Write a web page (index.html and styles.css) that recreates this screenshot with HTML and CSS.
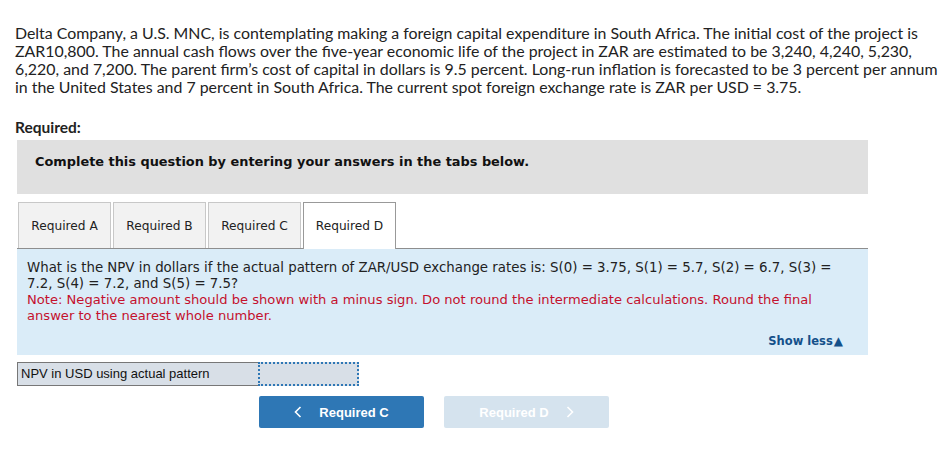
FILE: index.html
```html
<!DOCTYPE html>
<html>
<head>
<meta charset="utf-8">
<link rel="stylesheet" href="styles.css">
</head>
<body>
<div class="page">
  <p class="intro">Delta Company, a U.S. MNC, is contemplating making a foreign capital expenditure in South Africa. The initial cost of the project is ZAR10,800. The annual cash flows over the five-year economic life of the project in ZAR are estimated to be 3,240, 4,240, 5,230, 6,220, and 7,200. The parent firm’s cost of capital in dollars is 9.5 percent. Long-run inflation is forecasted to be 3 percent per annum in the United States and 7 percent in South Africa. The current spot foreign exchange rate is ZAR per USD = 3.75.</p>
  <h2 class="required">Required:</h2>
  <div class="box">
    <div class="instr">Complete this question by entering your answers in the tabs below.</div>
  </div>
  <div class="tabs">
    <div class="tab">Required A</div>
    <div class="tab">Required B</div>
    <div class="tab">Required C</div>
    <div class="tab active">Required D</div>
  </div>
  <div class="panel">
    <div class="question">What is the NPV in dollars if the actual pattern of ZAR/USD exchange rates is: S(0) = 3.75, S(1) = 5.7, S(2) = 6.7, S(3) = 7.2, S(4) = 7.2, and S(5) = 7.5?</div>
    <div class="note">Note: Negative amount should be shown with a minus sign. Do not round the intermediate calculations. Round the final answer to the nearest whole number.</div>
    <div class="showless">Show less<span class="tri">▲</span></div>
  </div>
  <div class="answer">
    <div class="label">NPV in USD using actual pattern</div>
    <div class="input"></div>
  </div>
  <div class="nav">
    <div class="btn prev"><svg class="chev" width="8" height="12" viewBox="0 0 8 12"><path d="M6.5 1 L1.5 6 L6.5 11" fill="none" stroke="#fff" stroke-width="1.6"/></svg>Required C</div>
    <div class="btn next">Required D<svg class="chev r" width="8" height="12" viewBox="0 0 8 12"><path d="M1.5 1 L6.5 6 L1.5 11" fill="none" stroke="#fff" stroke-width="1.6"/></svg></div>
  </div>
</div>
</body>
</html>
```

FILE: styles.css
```css
html, body { margin: 0; padding: 0; background: #fff; }
.page { padding: 24px 0 0 17px; width: 851px; }
.intro {
  margin: 0 0 0 -2px;
  width: 936px;
  font-family: Lato, "Open Sans", sans-serif;
  font-size: 15.9px;
  line-height: 18px;
  color: #222;
}
.required {
  margin: 22px 0 0 -2px;
  font-family: Lato, sans-serif;
  font-size: 15.5px;
  font-weight: bold;
  line-height: 18px;
  color: #222;
}
.box {
  margin-top: 4px;
  background: #e0e0e0;
  height: 54px;
  display: flex;
  align-items: center;
  padding-left: 18px;
}
.instr {
  font-family: "DejaVu Sans", Verdana, sans-serif;
  font-weight: bold;
  font-size: 12.9px;
  color: #111;
  margin-top: -12px;
}
.tabs {
  margin-top: 8px;
  display: flex;
  gap: 2px;
  padding-left: 1px;
  border-bottom: 1px solid #8e8e8e;
  height: 46px;
}
.tab {
  width: 91px;
  height: 45px;
  border: 1px solid #c8c8c8;
  border-bottom: none;
  background: #f2f2f2;
  font-family: "DejaVu Sans", Verdana, sans-serif;
  font-size: 12.2px;
  color: #222;
  display: flex;
  align-items: center;
  justify-content: center;
}
.tab.active {
  background: #fff;
  border-color: #999;
  height: 46px;
  margin-bottom: -1px;
}
.panel {
  background: #daecf8;
  height: 106px;
  padding: 11px 10px 0 10px;
  box-sizing: border-box;
  font-family: "DejaVu Sans", Verdana, sans-serif;
  font-size: 13.35px;
  line-height: 16px;
  color: #222;
}
.note { color: #c4112e; font-size: 13.1px; }
.showless {
  text-align: right;
  margin-top: 9px;
  margin-right: 15px;
  font-weight: bold;
  font-size: 11.5px;
  color: #14508a;
}
.tri { font-size: 12px; margin-left: 1px; }
.answer {
  margin-top: 7px;
  display: flex;
  height: 24px;
}
.label {
  width: 241px;
  box-sizing: border-box;
  border: 1px solid #777;
  border-right: none;
  background: #d8dfe7;
  font-family: "Liberation Sans", Arial, sans-serif;
  font-size: 13px;
  line-height: 22px;
  padding-left: 3px;
  color: #111;
}
.input {
  width: 101px;
  box-sizing: border-box;
  border: 2px dotted #2e77b5;
  background: #d8dfe7;
}
.nav {
  margin-top: 10px;
  margin-left: 242px;
  display: flex;
  gap: 20px;
}
.btn {
  width: 165px;
  height: 32px;
  border-radius: 2px;
  display: flex;
  align-items: center;
  justify-content: center;
  font-family: "Liberation Sans", Arial, sans-serif;
  font-weight: bold;
  font-size: 13px;
  color: #fff;
}
.prev { background: #2e77b5; }
.next { background: #d5e3ee; color: #fff; }
.chev { margin-right: 17px; }
.chev.r { margin-right: 0; margin-left: 17px; }
```
